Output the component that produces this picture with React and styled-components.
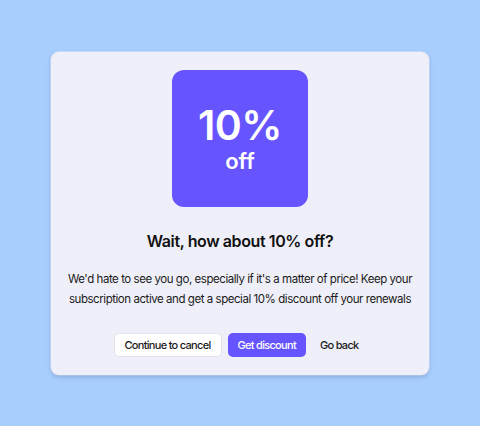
import React from "react";
import styled, { createGlobalStyle } from "styled-components";

const Global = createGlobalStyle`
  html, body { margin: 0; padding: 0; }
  body {
    background: #a8cefe;
    font-family: Inter, "Noto Sans", sans-serif;
    -webkit-font-smoothing: antialiased;
  }
`;

const Page = styled.div`
  width: 480px;
  height: 426px;
  display: flex;
  align-items: center;
  justify-content: center;
`;

const Card = styled.div`
  width: 378px;
  height: 323px;
  box-sizing: border-box;
  padding: 18px 14px;
  background: #efeff9;
  border-radius: 8px;
  box-shadow: 0 2px 4px rgba(40, 60, 100, 0.25), 0 0 0 1px rgba(255,255,255,0.4);
  display: flex;
  flex-direction: column;
  align-items: center;
`;

const Badge = styled.div`
  width: 136px;
  height: 137px;
  flex-shrink: 0;
  border-radius: 12px;
  background: #6655ff;
  color: #fff;
  display: flex;
  flex-direction: column;
  align-items: center;
  justify-content: center;
  font-weight: 600;
`;

const Big = styled.div`
  font-size: 41px;
  line-height: 46px;
  letter-spacing: -0.5px;
`;

const Small = styled.div`
  font-size: 22px;
  line-height: 26px;
`;

const Title = styled.h2`
  margin: 22px 0 0;
  font-size: 16px;
  line-height: 24px;
  font-weight: 600;
  letter-spacing: -0.4px;
  color: #111;
`;

const Body = styled.p`
  margin: 16px 0 0;
  font-size: 11.5px;
  line-height: 20px;
  letter-spacing: -0.45px;
  text-align: center;
  color: #1a1a1a;
`;

const Actions = styled.div`
  margin-top: 24px;
  display: flex;
  align-items: center;
  gap: 6px;
`;

const Button = styled.button`
  font-family: inherit;
  font-size: 11px;
  font-weight: 500;
  letter-spacing: -0.7px;
  height: 24px;
  box-sizing: border-box;
  padding: 0 ${(p) => (p.$variant === "ghost" ? "8px" : "10px")};
  border-radius: 5px;
  cursor: pointer;
  border: ${(p) =>
    p.$variant === "secondary" ? "1px solid #e4e4ee" : "none"};
  background: ${(p) =>
    p.$variant === "primary"
      ? "#6655ff"
      : p.$variant === "secondary"
      ? "#ffffff"
      : "transparent"};
  color: ${(p) => (p.$variant === "primary" ? "#fff" : "#1a1a1a")};
`;

export default function App() {
  return (
    <>
      <Global />
      <Page>
        <Card>
          <Badge>
            <Big>10%</Big>
            <Small>off</Small>
          </Badge>
          <Title>Wait, how about 10% off?</Title>
          <Body>
            We'd hate to see you go, especially if it's a matter of price! Keep
            your subscription active and get a special 10% discount off your
            renewals
          </Body>
          <Actions>
            <Button $variant="secondary">Continue to cancel</Button>
            <Button $variant="primary">Get discount</Button>
            <Button $variant="ghost">Go back</Button>
          </Actions>
        </Card>
      </Page>
    </>
  );
}
